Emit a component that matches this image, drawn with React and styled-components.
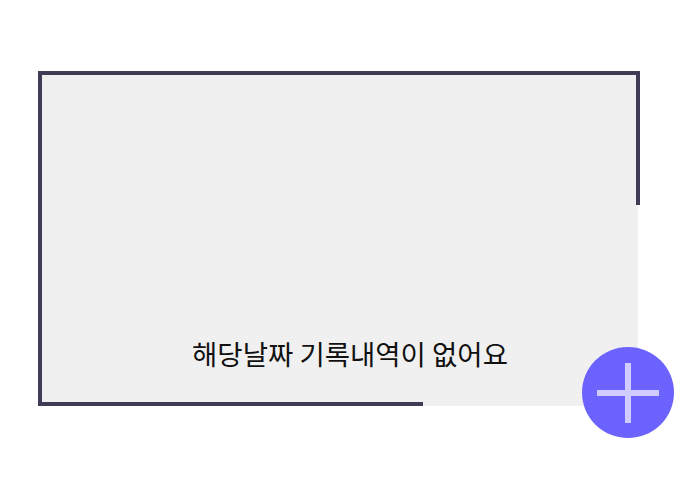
import React from "react";
import styled, { createGlobalStyle } from "styled-components";

const Global = createGlobalStyle`
  html, body { margin: 0; padding: 0; background: #ffffff; }
  body { font-family: "Noto Sans CJK KR", "Noto Sans", sans-serif; }
`;

const Page = styled.div`
  width: 700px;
  height: 500px;
  padding: 71px 0 0 38px;
  box-sizing: border-box;
`;

const Panel = styled.div`
  position: relative;
  width: 600px;
  height: 335px;
  background: #f0f0f0;
  display: flex;
  flex-direction: column;
  justify-content: flex-end;
  align-items: center;
  padding: 0 0 35px 24px;
  box-sizing: border-box;
`;

const Line = styled.span`
  position: absolute;
  background: #3f3d56;
  left: ${(p) => p.$left}px;
  top: ${(p) => p.$top}px;
  width: ${(p) => p.$w}px;
  height: ${(p) => p.$h}px;
`;

const Message = styled.p`
  margin: 0;
  font-size: 27.5px;
  line-height: 36px;
  color: #111111;
  white-space: nowrap;
`;

const Fab = styled.button`
  position: absolute;
  left: 544px;
  top: 276px;
  width: 92px;
  height: 91px;
  border-radius: 50%;
  border: none;
  padding: 0;
  background: #6c63ff;
  display: flex;
  align-items: center;
  justify-content: center;
  cursor: pointer;
`;

export default function App() {
  return (
    <>
      <Global />
      <Page>
        <Panel>
          <Line $left={0} $top={0} $w={602} $h={4} />
          <Line $left={0} $top={0} $w={4} $h={335} />
          <Line $left={598} $top={0} $w={4} $h={134} />
          <Line $left={0} $top={331} $w={385} $h={4} />
          <Message>해당날짜 기록내역이 없어요</Message>
          <Fab aria-label="add">
            <svg width="62" height="60" viewBox="0 0 62 60">
              <rect x="28" y="0" width="6" height="60" fill="#d0ccff" />
              <rect x="0" y="27" width="62" height="6" fill="#d0ccff" />
            </svg>
          </Fab>
        </Panel>
      </Page>
    </>
  );
}
